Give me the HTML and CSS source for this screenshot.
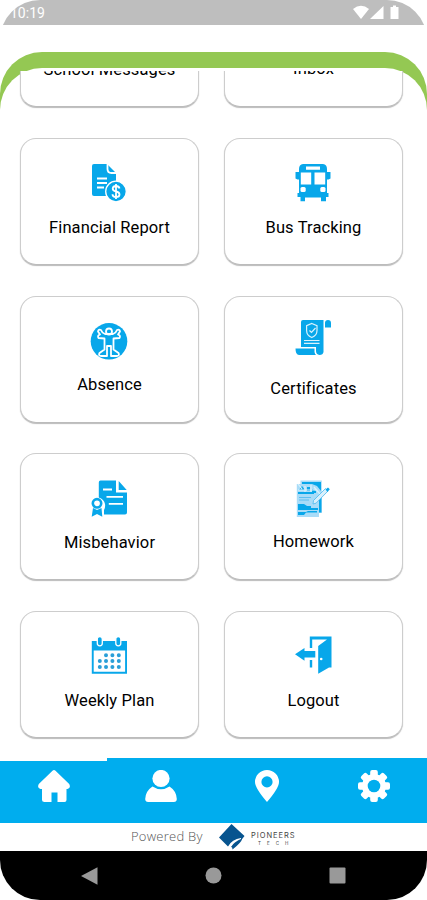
FILE: index.html
```html
<!DOCTYPE html>
<html lang="en">
<head>
  <meta charset="UTF-8" />
  <meta name="viewport" content="width=device-width, initial-scale=1.0"/>
  <title>School App</title>
  <link rel="stylesheet" href="styles.css">
</head>
<body>
  <div class="phone">
    <header class="status">
      <span class="time">10:19</span>
      <svg class="status-icons" width="48" height="16" viewBox="0 0 48 16">
        <path d="M0 4 Q8 -2.5 16 4 L8 14z"/>
        <path d="M30.500 1v13H17z"/>
        <path d="M37.500 2h2.500V.5h3V2h2.500v12h-8z"/>
      </svg>
    </header>

    <main class="frame">
      <div class="sheet">
        <div class="scroll">
          <div class="grid">
            <a class="card"><span class="icon"></span><span class="label">School Messages</span></a>
            <a class="card inbox"><span class="icon"></span><span class="label">Inbox</span></a>

            <a class="card">
              <svg class="icon" viewBox="0 0 36 38">
                <path d="M3 0h13l9 9v23H3a2 2 0 0 1-2-2V2a2 2 0 0 1 2-2z"/>
                <path class="line" d="M16.500 0v5q0 4 4 4H25M6 14.500h10M6 19h10M6 23.500h7"/>
                <circle class="ring" cx="25" cy="27.500" r="10.300"/>
                <path class="line" d="M28.500 24.500q-.5-2.500-3.500-2.500t-3.300 2.600q0 2.300 3.300 2.900t3.500 2.900q0 2.600-3.500 2.600t-3.500-2.800M25 20v15"/>
              </svg>
              <span class="label">Financial Report</span>
            </a>
            <a class="card">
              <svg class="icon" viewBox="0 0 36 38">
                <path d="M8 0h20q4 .5 4 5v3h3.500v6.500l-2 1H32V29h1.500v4H31v4.200h-5V33.500H10v3.700H5.500V33H2.500v-4H4V15.500H2.500l-2-1V8H4V5q0-4.500 4-5z"/>
                <path class="white" d="M11 2.500h14v3.200H11zM5.800 8.500h10.400v12H5.800zM19.500 8.500h10.700v12H19.500z"/>
                <rect class="white" x="5.500" y="23" width="5.200" height="5" rx="1.500"/>
                <rect class="white" x="25.300" y="23" width="5.200" height="5" rx="1.500"/>
              </svg>
              <span class="label">Bus Tracking</span>
            </a>

            <a class="card">
              <svg class="icon" viewBox="0 0 36 38">
                <circle cx="18" cy="19.300" r="18.300"/>
                <path class="outline" d="M14 12q-3-1-4-4-2.500-1-3 1.500l2 3q-3 1-1.500 3.500l6 .5v11l-5 3.500q-1.500 3 2 3H16v-10h4v10h5.500q3.500 0 2-3l-5-3.500v-11l6-.5q1.500-2.500-1.500-3.500l2-3q-.5-2.500-3-1.500-1 3-4 4z"/>
                <circle class="outline" cx="18" cy="9.500" r="3"/>
              </svg>
              <span class="label">Absence</span>
            </a>
            <a class="card certificates">
              <svg class="icon" viewBox="0 0 36 38">
                <path d="M8 0h20.500v32q-.5 3-4 3-3.500-.5-3.500-4v-4H6V2q0-2 2-2zM30 7.500V3q0-3 3-3t3 3v4.500zM.5 28.500H19.500V32q.3 2 1.500 3H4q-3.500 0-3.500-6.500z"/>
                <path class="thin" d="M16.800 3.500l5.200 2.200v4.800q0 5-5.200 7-5.200-2-5.200-7V5.700z"/>
                <path class="thin" d="M14.500 10.500l2 2 4-4.500M9 20.500h15.500M9 23.300h15.500"/>
              </svg>
              <span class="label">Certificates</span>
            </a>

            <a class="card">
              <svg class="icon" viewBox="0 0 36 38">
                <path d="M9.500.5H25v12h11v20q0 2-2 2H13v-4.500q1.500-2.500 1-6-1-5-6.200-6.500V2.500q0-2 1.700-2zM27.700 1l8 9h-8z"/>
                <path class="line" d="M12 9.500h9M15.500 16.800H32M17.800 23.800H32"/>
                <path d="M2 28l4 2 4.500-2 .8 8.800L6 34 .7 36.800z"/>
                <circle class="medal" cx="6" cy="23.300" r="4.200"/>
              </svg>
              <span class="label">Misbehavior</span>
            </a>
            <a class="card homework">
              <svg class="icon" viewBox="0 0 36 38">
                <path class="pale" d="M5.500.5h21.300V33H24v4H1.800V4h3.700z"/>
                <path d="M7 2h19v9l-4-5-5-2H7zM4 10l3-4 3 4zM12 7h3v4h-3zM17 9l4 2v2h-4zM3 12h16v2H3zM3 24h6l3 2h4v2h7v2H3zM3 32h8l2-1h9v1.500H11L9 35H3zM24 20l2.500-3v15.500H24z"/>
                <path class="thin" d="M3 4l4 5M10 6v6M16 5v7M19 7l6 7M3 10h18"/>
                <path class="fine" d="M4 17.500h12M4 20h10M18 24l3-.8L33 11l-2.500-2.500L18.500 20.500z"/>
                <path d="M30.500 9.500L33 7.500 34.800 9.300 32.500 12z"/>
              </svg>
              <span class="label">Homework</span>
            </a>

            <a class="card">
              <svg class="icon" viewBox="0 0 36 38">
                <path d="M.8 4H36v32.800H.8z"/>
                <path class="white" d="M2.700 13.500h31.400v21.300H2.700z"/>
                <rect class="ring" x="6.300" y="-.5" width="5" height="9.300" rx="2.500"/>
                <rect class="ring" x="24.800" y="-.5" width="5" height="9.300" rx="2.500"/>
                <path class="dots" d="M15 18.200h.01M21.400 18.200h.01M27.800 18.200h.01M8.800 24h.01M15 24h.01M21.400 24h.01M27.800 24h.01M8.800 30h.01M15 30h.01M21.400 30h.01M27.800 30h.01"/>
              </svg>
              <span class="label">Weekly Plan</span>
            </a>
            <a class="card">
              <svg class="icon" viewBox="0 0 36 38">
                <path d="M14.800-.5H36.500V30.500H34L23.200 36.800V9L32 2.500H17.200V11h-2.400zM14.800 23h2.400v7.500h-2.400z"/>
                <path d="M0 17.200L9.500 11v3H20.300v6.500H9.500v3.200z"/>
                <circle class="white" cx="26.200" cy="22" r="1.300"/>
              </svg>
              <span class="label">Logout</span>
            </a>
          </div>
        </div>
      </div>
    </main>

    <nav class="tabs">
      <a class="tab active">
        <svg width="32" height="32" viewBox="0 0 32 32"><path d="M14.500.8q1.500-1.400 3 0L31.200 14q2 4-1.700 5H28.500v11q0 2-2 2H19.500V22.500h-6V32h-7q-2.500 0-2.500-2V19H2.500q-3.700-1-1.700-5z"/></svg>
      </a>
      <a class="tab">
        <svg width="32" height="32" viewBox="0 0 32 32"><circle cx="16" cy="8.500" r="8.600"/><path d="M7.500 16.500q8.500 5.500 17 0Q31.500 21 31.800 29q0 3-3 3H3.200q-3 0-3-3Q.5 21 7.500 16.500z"/></svg>
      </a>
      <a class="tab">
        <svg width="24" height="32" viewBox="0 0 24 32"><path fill-rule="evenodd" d="M12 0a12 12 0 0 1 12 12q0 6-12 20Q0 18 0 12A12 12 0 0 1 12 0zm0 6.300a5.600 5.600 0 1 0 0 11.200 5.600 5.600 0 0 0 0-11.200z"/></svg>
      </a>
      <a class="tab">
        <svg width="32" height="32" viewBox="-16 -16 32 32">
          <g id="teeth">
            <rect x="-3.800" y="-16" width="7.600" height="32" rx="2"/>
            <rect x="-16" y="-3.800" width="32" height="7.600" rx="2"/>
          </g>
          <use href="#teeth" transform="rotate(45)"/>
          <circle r="12"/>
          <circle class="hub" r="6.300"/>
        </svg>
      </a>
    </nav>

    <div class="powered">
      <span class="by">Powered By</span>
      <svg width="26" height="26" viewBox="0 0 26 26">
        <path d="M12.500 0L25.500 12 22 16.500V14Q13 15 9 22.500L0 13.500z"/>
        <path d="M23 14.500q0 3.500-9.500 11 0-3-1.500-2.500 3-5.500 11-8.500z"/>
      </svg>
      <span class="brand"><b>PIONEERS</b><small>TECH</small></span>
    </div>

    <footer class="system">
      <svg width="17" height="18" viewBox="0 0 17 18"><path d="M0 9L16.500.2v17.600z"/></svg>
      <svg width="17" height="17" viewBox="0 0 17 17"><circle cx="8.500" cy="8.500" r="8"/></svg>
      <svg width="17" height="17" viewBox="0 0 17 17"><rect x=".5" y=".5" width="16" height="16" rx="1"/></svg>
    </footer>
  </div>
</body>
</html>
```
FILE: styles.css
```css
body {
  margin: 0;
  background: #fff;
  font-family: Roboto, "Liberation Sans", sans-serif;
}
.phone {
  display: flex;
  flex-direction: column;
  width: 427px;
  height: 900px;
  border-radius: 40px;
  overflow: hidden;
  background: #fff;
}
svg {
  display: block;
}

/* status bar */
.status {
  display: flex;
  justify-content: space-between;
  box-sizing: border-box;
  height: 25px;
  padding: 5px 26px 0 10px;
  background: #bebebe;
  color: #fff;
}
.time {
  font-size: 14px;
  line-height: 17px;
}
.status-icons {
  fill: #fff;
}

/* green header with the white sheet over it */
.frame {
  height: 690px;
  margin-top: 27px;
  padding-top: 16px;
  background: #94c853;
  border-radius: 42px 42px 0 0;
  overflow: hidden;
}
.sheet {
  height: 690px;
  padding-top: 3px;
  background: #fff;
  border-radius: 42px 42px 0 0;
}
.scroll {
  height: 687px;
  overflow: hidden;
}
.grid {
  display: grid;
  grid-template-columns: 179px 179px;
  grid-auto-rows: 127px;
  gap: 30.700px 25px;
  margin: -90.800px 0 0 20px;
}
.card {
  display: flex;
  flex-direction: column;
  align-items: center;
  box-sizing: border-box;
  padding-top: 25.500px;
  border: 1px solid #cdcdcd;
  border-bottom-color: #bcbcbc;
  border-radius: 16px;
  box-shadow: 0 1px 1px #bbb;
  background: #fff;
}
.icon {
  width: 36px;
  height: 38px;
  margin-right: 1px;
  overflow: visible;
  fill: #08a7ea;
}
.label {
  margin-top: 15.400px;
  font-size: 16.500px;
  line-height: 20px;
  letter-spacing: 0.120px;
  color: #000;
  white-space: nowrap;
}
.certificates {
  padding-top: 23px;
}
.certificates .label {
  margin-top: 21.400px;
}
.homework .label,
.inbox .label {
  margin-top: 14.300px;
}

.white {
  fill: #fff;
}
.line,
.thin,
.outline {
  fill: none;
  stroke: #fff;
  stroke-width: 1.8;
}
.thin {
  stroke: #d9f2fd;
  stroke-width: 1.2;
}
.outline {
  stroke-linejoin: round;
}
.ring {
  stroke: #fff;
  stroke-width: 1.3;
}
.medal {
  fill: #fff;
  stroke: #08a7ea;
  stroke-width: 2.6;
}
.pale {
  fill: #a9dcf8;
}
.fine {
  fill: #d9f0fc;
  stroke: #4db8ee;
  stroke-width: 0.8;
}
.dots {
  fill: none;
  stroke: #2a9fd8;
  stroke-width: 4;
  stroke-linecap: round;
}

/* bottom tabs */
.tabs {
  display: grid;
  grid-template-columns: repeat(4, 1fr);
  height: 65px;
  background: #00adee;
}
.tab {
  display: flex;
  justify-content: center;
  box-sizing: border-box;
  padding: 12px 0 0 1px;
  fill: #fff;
}
.tab.active {
  padding-top: 8.500px;
  border-top: 3.500px solid #fff;
}
.hub {
  fill: #00adee;
}

.powered {
  display: flex;
  align-items: center;
  box-sizing: border-box;
  height: 28px;
  padding-left: 131px;
  fill: #07548f;
}
.by {
  width: 88px;
  margin-top: -2px;
  font: 300 13px "Open Sans", sans-serif;
  letter-spacing: 0.250px;
  color: #555;
}
.brand {
  display: flex;
  flex-direction: column;
  align-items: center;
  gap: 1px;
  margin-left: 6px;
  padding-top: 4px;
  color: #444;
}
.brand b {
  font: 7.500px/8px Inter, sans-serif;
  letter-spacing: 0.950px;
}
.brand small {
  font: 4.500px/5px Inter, sans-serif;
  letter-spacing: 6px;
  padding-left: 6px;
}

/* android buttons */
.system {
  display: flex;
  justify-content: space-around;
  align-items: center;
  flex: 1;
  padding: 0 28px;
  background: #000;
  fill: #999;
}
```
